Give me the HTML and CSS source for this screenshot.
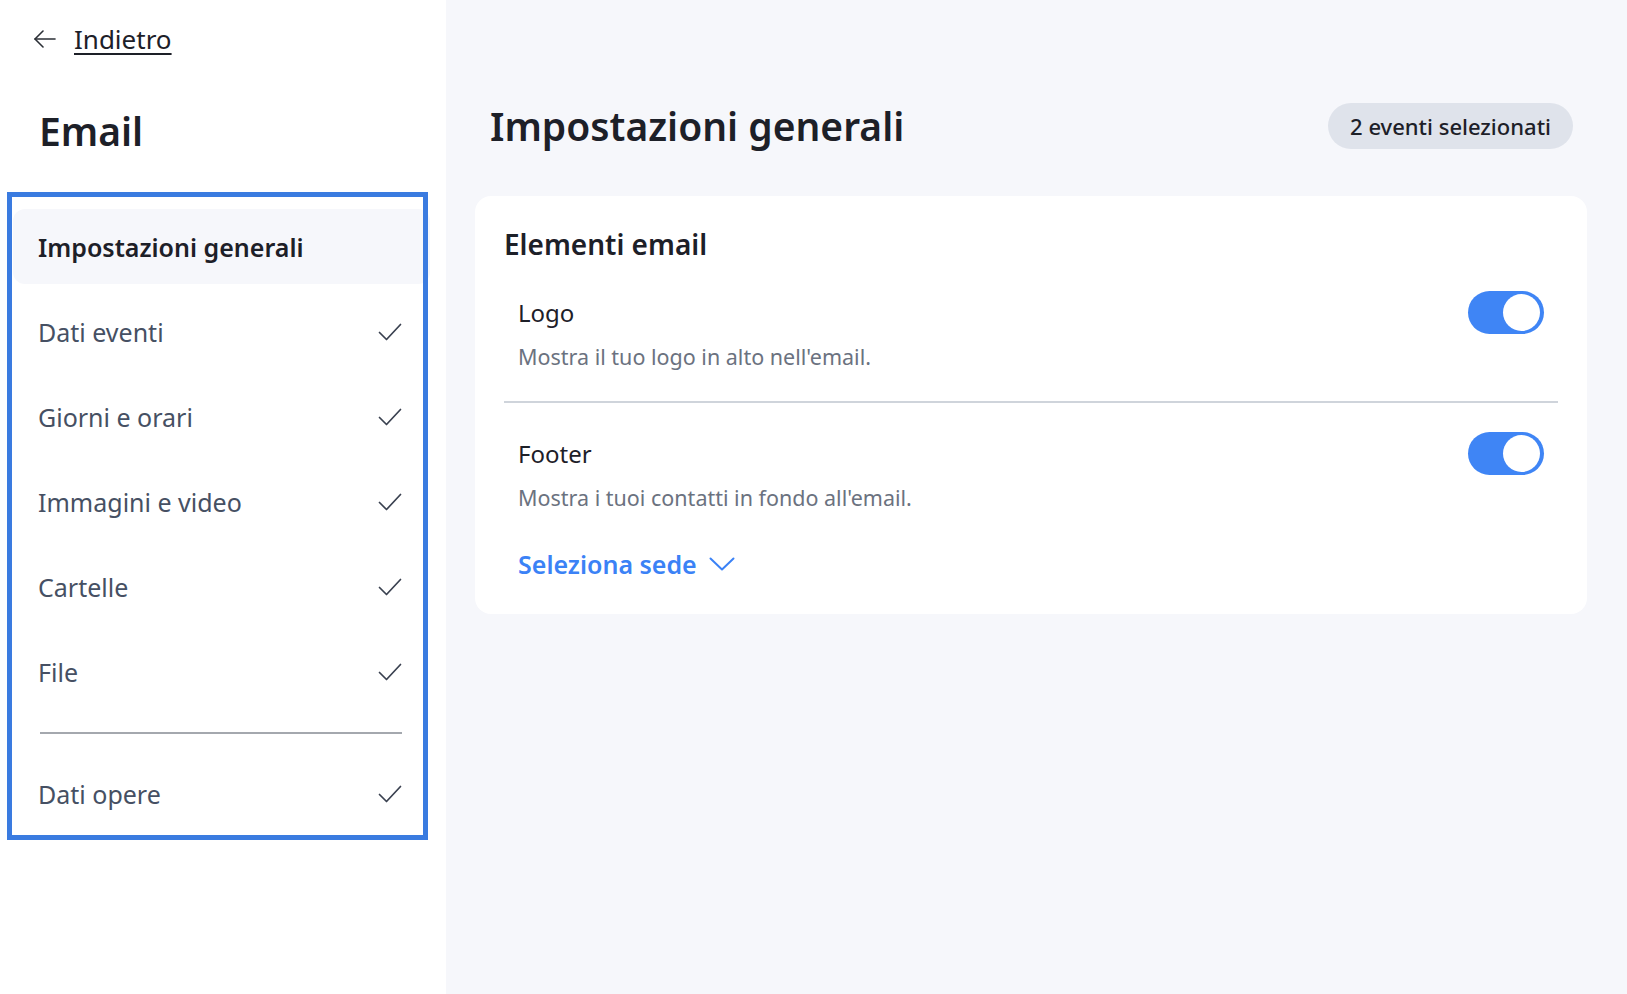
FILE: index.html
```html
<!DOCTYPE html>
<html lang="it">
<head>
<meta charset="utf-8">
<title>Email - Impostazioni generali</title>
<link rel="stylesheet" href="styles.css">
</head>
<body>
<div class="app">
  <aside class="sidebar">
    <a class="back" href="#">
      <svg class="back-icon" width="22" height="18" viewBox="0 0 22 18" fill="none" stroke="#2b2f36" stroke-width="1.6" stroke-linecap="round" stroke-linejoin="round">
        <path d="M1 9H21"/>
        <path d="M9 1L1 9L9 17"/>
      </svg>
      <span class="back-label">Indietro</span>
    </a>
    <h1 class="side-title">Email</h1>
    <nav class="nav">
      <div class="nav-item active"><span>Impostazioni generali</span></div>
      <div class="nav-item"><span>Dati eventi</span><svg class="check" width="24" height="18" viewBox="0 0 24 18" fill="none" stroke="#3a4150" stroke-width="1.7" stroke-linecap="round" stroke-linejoin="round"><path d="M1.5 9.5L8.5 16.5L22.5 1.5"/></svg></div>
      <div class="nav-item"><span>Giorni e orari</span><svg class="check" width="24" height="18" viewBox="0 0 24 18" fill="none" stroke="#3a4150" stroke-width="1.7" stroke-linecap="round" stroke-linejoin="round"><path d="M1.5 9.5L8.5 16.5L22.5 1.5"/></svg></div>
      <div class="nav-item"><span>Immagini e video</span><svg class="check" width="24" height="18" viewBox="0 0 24 18" fill="none" stroke="#3a4150" stroke-width="1.7" stroke-linecap="round" stroke-linejoin="round"><path d="M1.5 9.5L8.5 16.5L22.5 1.5"/></svg></div>
      <div class="nav-item"><span>Cartelle</span><svg class="check" width="24" height="18" viewBox="0 0 24 18" fill="none" stroke="#3a4150" stroke-width="1.7" stroke-linecap="round" stroke-linejoin="round"><path d="M1.5 9.5L8.5 16.5L22.5 1.5"/></svg></div>
      <div class="nav-item"><span>File</span><svg class="check" width="24" height="18" viewBox="0 0 24 18" fill="none" stroke="#3a4150" stroke-width="1.7" stroke-linecap="round" stroke-linejoin="round"><path d="M1.5 9.5L8.5 16.5L22.5 1.5"/></svg></div>
      <div class="nav-divider"></div>
      <div class="nav-item"><span>Dati opere</span><svg class="check" width="24" height="18" viewBox="0 0 24 18" fill="none" stroke="#3a4150" stroke-width="1.7" stroke-linecap="round" stroke-linejoin="round"><path d="M1.5 9.5L8.5 16.5L22.5 1.5"/></svg></div>
    </nav>
  </aside>

  <main class="main">
    <header class="main-header">
      <h2 class="main-title">Impostazioni generali</h2>
      <span class="badge">2 eventi selezionati</span>
    </header>

    <section class="card">
      <h3 class="card-title">Elementi email</h3>

      <div class="setting">
        <div class="setting-row">
          <span class="setting-name">Logo</span>
          <span class="toggle on"><span class="knob"></span></span>
        </div>
        <p class="setting-desc">Mostra il tuo logo in alto nell'email.</p>
      </div>

      <div class="card-divider"></div>

      <div class="setting setting-last">
        <div class="setting-row">
          <span class="setting-name">Footer</span>
          <span class="toggle on"><span class="knob"></span></span>
        </div>
        <p class="setting-desc">Mostra i tuoi contatti in fondo all'email.</p>
        <a class="select-link" href="#">
          <span>Seleziona sede</span>
          <svg width="26" height="14" viewBox="0 0 26 14" fill="none" stroke="#3b82f6" stroke-width="2" stroke-linecap="round" stroke-linejoin="round"><path d="M1.5 1.5L13 12.5L24.5 1.5"/></svg>
        </a>
      </div>
    </section>
  </main>
</div>
</body>
</html>
```

FILE: styles.css
```css
* {
  box-sizing: border-box;
}

html, body {
  margin: 0;
  padding: 0;
  height: 100%;
}

body {
  font-family: "Noto Sans", "Open Sans", "Liberation Sans", sans-serif;
  color: #1d2028;
  background: #f6f7fb;
}

.app {
  display: flex;
  min-height: 100vh;
}

/* ---------- Sidebar ---------- */
.sidebar {
  width: 446px;
  flex: 0 0 446px;
  background: #ffffff;
  padding: 22px 23px 0 12px;
  display: flex;
  flex-direction: column;
}

.back {
  display: flex;
  align-items: center;
  gap: 18px;
  margin-left: 22px;
  color: #1d2028;
  text-decoration: none;
  align-self: flex-start;
}

.back-icon {
  display: block;
  flex: none;
}

.back-label {
  font-size: 26px;
  line-height: 34px;
  text-decoration: underline;
  text-decoration-thickness: 2px;
  text-underline-offset: 4px;
}

.side-title {
  margin: 48px 0 0 27px;
  font-size: 39px;
  line-height: 54px;
  font-weight: 600;
  color: #1d2028;
}

.nav {
  margin-top: 39px;
  outline: 5px solid #3a7be0;
  padding: 12px 0 4px 0;
  display: flex;
  flex-direction: column;
  gap: 10px;
}

.nav-item {
  height: 75px;
  margin: 0 -7px 0 1px;
  padding: 0 28px 0 25px;
  display: flex;
  align-items: center;
  justify-content: space-between;
  font-size: 25px;
  color: #465063;
  border-radius: 12px;
}

.nav-item.active {
  background: #f6f7fb;
  color: #1d2028;
  font-weight: 600;
}

.check {
  display: block;
  flex: none;
}

.nav-divider {
  height: 2px;
  background: #a4a8ae;
  margin: 13px 21px 12px 28px;
}

/* ---------- Main ---------- */
.main {
  flex: 1;
  padding: 99px 40px 40px 29px;
}

.main-header {
  display: flex;
  align-items: center;
  justify-content: space-between;
  padding: 0 14px 0 15px;
  min-height: 54px;
}

.main-title {
  margin: 0;
  font-size: 39px;
  line-height: 54px;
  font-weight: 600;
  color: #1d2028;
}

.badge {
  display: inline-flex;
  align-items: center;
  height: 46px;
  padding: 0 22px;
  border-radius: 23px;
  background: #dfe3eb;
  font-size: 22px;
  font-weight: 500;
  color: #1d2028;
}

.card {
  margin-top: 43px;
  background: #ffffff;
  border-radius: 16px;
  padding: 29px 29px 33px 29px;
}

.card-title {
  margin: 0 0 28px 0;
  font-size: 28px;
  line-height: 38px;
  font-weight: 600;
  color: #1d2028;
}

.setting {
  padding: 0 14px 30px 14px;
}

.setting-last {
  padding: 29px 14px 0 14px;
}

.setting-row {
  display: flex;
  align-items: center;
  justify-content: space-between;
  height: 43px;
}

.setting-name {
  font-size: 24px;
  color: #1d2028;
}

.toggle {
  position: relative;
  display: block;
  width: 76px;
  height: 43px;
  border-radius: 22px;
  background: #3f85f5;
  flex: none;
}

.toggle .knob {
  position: absolute;
  top: 3px;
  right: 4px;
  width: 37px;
  height: 37px;
  border-radius: 50%;
  background: #ffffff;
}

.setting-desc {
  margin: 8px 0 0 0;
  font-size: 21.5px;
  line-height: 29px;
  color: #6b7280;
}

.card-divider {
  height: 1.5px;
  background: #cfd4db;
}

.select-link {
  display: flex;
  align-items: center;
  gap: 12px;
  margin-top: 36px;
  font-size: 25px;
  line-height: 33px;
  font-weight: 600;
  color: #3b82f6;
  text-decoration: none;
  width: max-content;
}

.select-link svg {
  display: block;
  flex: none;
}
```
